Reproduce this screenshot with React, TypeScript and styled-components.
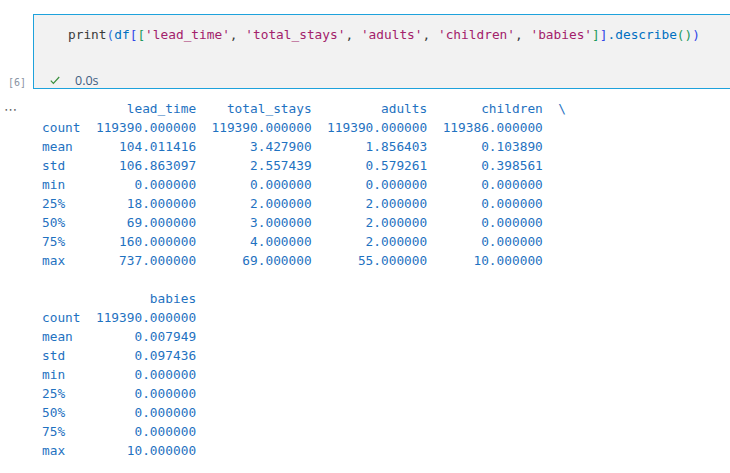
import React from 'react';
import styled, { createGlobalStyle } from 'styled-components';

const GlobalStyle = createGlobalStyle`
  html, body {
    margin: 0;
    padding: 0;
    background: #ffffff;
  }
`;

const MONO = `"DejaVu Sans Mono", "Liberation Mono", monospace`;

const Page = styled.div`
  padding-top: 14px;
  width: 730px;
  overflow: hidden;
`;

const CellRow = styled.div`
  display: flex;
`;

const Gutter = styled.div`
  width: 33px;
  flex-shrink: 0;
  display: flex;
  align-items: flex-end;
  justify-content: flex-start;
  padding-left: 8px;
  padding-bottom: 1px;
  box-sizing: border-box;
  font-family: ${MONO};
  font-size: 10px;
  color: #8a93a3;
`;

const CellBox = styled.div`
  flex: 1;
  background: #f2f2f2;
  border: 1px solid #1ea2dc;
  border-right: none;
`;

const CodeLine = styled.div`
  padding: 10px 0 0 34px;
  font-family: ${MONO};
  font-size: 12.8px;
  line-height: 19px;
  white-space: pre;
  color: #3b3b3b;
`;

const Token = styled.span<{ $c: string }>`
  color: ${p => p.$c};
`;

const StatusRow = styled.div`
  margin-top: 28px;
  height: 16px;
  display: flex;
  align-items: center;
  gap: 15px;
  padding-left: 16px;
`;

const Duration = styled.span`
  font-family: "Open Sans", "Noto Sans", sans-serif;
  font-size: 12.5px;
  color: #3e5d82;
`;

const OutputRow = styled.div`
  display: flex;
  margin-top: 10px;
`;

const OutGutter = styled.div`
  width: 42px;
  flex-shrink: 0;
  padding-left: 4px;
  padding-top: 1px;
  box-sizing: border-box;
  font-family: "DejaVu Sans", sans-serif;
  font-size: 13px;
  line-height: 19px;
  color: #616161;
`;

const OutputText = styled.pre`
  margin: 0;
  font-family: ${MONO};
  font-size: 12.8px;
  line-height: 19px;
  color: #1f72c1;
`;

const STR = '#a3216b';
const B1 = '#2f6fe0';
const B2 = '#3147e8';
const B3 = '#1c9a5c';
const FN = '#0070c1';

const output = `           lead_time    total_stays         adults       children  \\
count  119390.000000  119390.000000  119390.000000  119386.000000   
mean      104.011416       3.427900       1.856403       0.103890   
std       106.863097       2.557439       0.579261       0.398561   
min         0.000000       0.000000       0.000000       0.000000   
25%        18.000000       2.000000       2.000000       0.000000   
50%        69.000000       3.000000       2.000000       0.000000   
75%       160.000000       4.000000       2.000000       0.000000   
max       737.000000      69.000000      55.000000      10.000000   

              babies  
count  119390.000000  
mean        0.007949  
std         0.097436  
min         0.000000  
25%         0.000000  
50%         0.000000  
75%         0.000000  
max        10.000000  `;

const CheckIcon = () => (
  <svg width="10" height="9" viewBox="0 0 10 9">
    <polyline points="0.8,4.6 3.4,7.4 9.2,1" fill="none" stroke="#3a8f3e" strokeWidth="1.2" />
  </svg>
);

const App: React.FC = () => {
  return (
    <Page>
      <GlobalStyle />
      <CellRow>
        <Gutter>[6]</Gutter>
        <CellBox>
          <CodeLine>
            print<Token $c={B1}>(</Token>
            <Token $c={FN}>df</Token>
            <Token $c={B2}>[</Token>
            <Token $c={B3}>[</Token>
            <Token $c={STR}>'lead_time'</Token>, <Token $c={STR}>'total_stays'</Token>,{' '}
            <Token $c={STR}>'adults'</Token>, <Token $c={STR}>'children'</Token>,{' '}
            <Token $c={STR}>'babies'</Token>
            <Token $c={B3}>]</Token>
            <Token $c={B2}>]</Token>
            <Token $c={FN}>.describe</Token>
            <Token $c={B3}>()</Token>
            <Token $c={B2}>)</Token>
          </CodeLine>
          <StatusRow>
            <CheckIcon />
            <Duration>0.0s</Duration>
          </StatusRow>
        </CellBox>
      </CellRow>
      <OutputRow>
        <OutGutter>⋯</OutGutter>
        <OutputText>{output}</OutputText>
      </OutputRow>
    </Page>
  );
};

export default App;
